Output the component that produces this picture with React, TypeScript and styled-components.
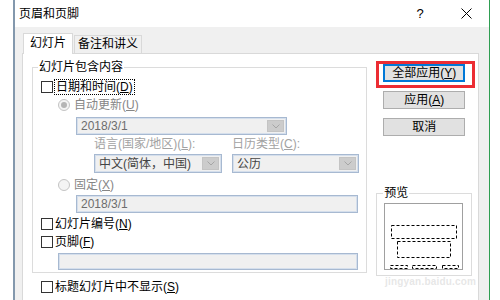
import styled, { createGlobalStyle } from "styled-components";

const GlobalStyle = createGlobalStyle`
  html, body {
    margin: 0;
    padding: 0;
    background: #ffffff;
  }
  body {
    font-family: "Liberation Sans", "Noto Sans CJK SC", sans-serif;
    font-size: 12px;
    color: #000;
  }
`;

const Window = styled.div`
  margin-left: 13px;
  width: 477px;
  height: 300px;
  box-sizing: border-box;
  border-left: 2px solid #8398ad;
  border-right: 1px solid #2f9e52;
  display: flex;
  flex-direction: column;
  overflow: hidden;
`;

const TitleBar = styled.div`
  height: 27px;
  flex: none;
  background: #ffffff;
  display: flex;
  align-items: center;
  padding-left: 4px;
`;

const Title = styled.div`
  flex: 1;
  font-size: 12px;
  line-height: 14px;
`;

const TitleButton = styled.div`
  width: 46px;
  height: 27px;
  display: flex;
  align-items: center;
  justify-content: center;
  font-size: 13px;
`;

const Body = styled.div`
  flex: 1;
  background: #f0f0f0;
  padding: 6px 10px 0 7px;
  display: flex;
  flex-direction: column;
`;

const TabRow = styled.div`
  height: 20px;
  display: flex;
  align-items: flex-end;
  padding-left: 1px;
`;

const Tab = styled.div<{ $active?: boolean }>`
  position: relative;
  z-index: 1;
  box-sizing: border-box;
  height: ${(p) => (p.$active ? "21px" : "18px")};
  margin-bottom: ${(p) => (p.$active ? "-1px" : "0")};
  width: ${(p) => (p.$active ? "50px" : "68px")};
  margin-left: ${(p) => (p.$active ? "0" : "1px")};
  background: ${(p) => (p.$active ? "#ffffff" : "#f0f0f0")};
  border: 1px solid #d9d9d9;
  border-bottom: none;
  display: flex;
  justify-content: center;
  padding-top: ${(p) => (p.$active ? "2px" : "1px")};
  line-height: 14px;
`;

const Panel = styled.div`
  flex: 1;
  background: #ffffff;
  border: 1px solid #d9d9d9;
  border-bottom: none;
  padding: 6px 6px 0 9px;
  display: flex;
`;

const LeftCol = styled.div`
  width: 336px;
  display: flex;
  flex-direction: column;
`;

const Group = styled.fieldset<{ $pad: string }>`
  margin: 0;
  min-width: 0;
  border: 1px solid #dcdcdc;
  padding: ${(p) => p.$pad};
  display: flex;
  flex-direction: column;
`;

const Legend = styled.legend<{ $shift: number }>`
  padding: 0 1px;
  margin-left: ${(p) => p.$shift}px;
  line-height: 14px;
  height: 14px;
`;

const Row = styled.div<{ $mt: number; $indent?: number; $h?: number }>`
  display: flex;
  align-items: center;
  height: ${(p) => p.$h ?? 14}px;
  margin-top: ${(p) => p.$mt}px;
  padding-left: ${(p) => p.$indent ?? 0}px;
  line-height: 14px;
`;

const CheckBox = styled.span`
  width: 12px;
  height: 12px;
  box-sizing: border-box;
  border: 1px solid #333333;
  background: #ffffff;
  margin-right: 2px;
  flex: none;
`;

const FocusText = styled.span`
  outline: 1px dotted #000;
  outline-offset: 0;
  padding: 0 1px;
`;

const Radio = styled.span<{ $checked?: boolean }>`
  width: 12px;
  height: 12px;
  box-sizing: border-box;
  border-radius: 50%;
  border: 1px solid #c4c4c4;
  background: #f4f4f4;
  margin-right: 4px;
  flex: none;
  display: flex;
  align-items: center;
  justify-content: center;
  &::after {
    content: "";
    width: 6px;
    height: 6px;
    border-radius: 50%;
    background: ${(p) => (p.$checked ? "#b5b5b5" : "transparent")};
  }
`;

const Disabled = styled.span<{ $light?: boolean }>`
  color: ${(p) => (p.$light ? "#a2a2a2" : "#868686")};
`;

const Field = styled.div<{ $w: number; $h: number; $dark?: boolean }>`
  width: ${(p) => p.$w}px;
  height: ${(p) => p.$h}px;
  box-sizing: border-box;
  border: 1px solid #a7b9d1;
  box-shadow: inset 0 0 0 1px #d5dfec;
  background: #f0f0f0;
  display: flex;
  align-items: center;
  padding-left: 4px;
  color: ${(p) => (p.$dark ? "#444444" : "#6d6d6d")};
  line-height: 14px;
`;

const FieldText = styled.span`
  flex: 1;
`;

const ArrowBox = styled.span`
  width: 17px;
  align-self: stretch;
  margin: 2px;
  box-sizing: border-box;
  background: #cccccc;
  border: 1px solid #c4c4c4;
  display: flex;
  align-items: center;
  justify-content: center;
`;

const Pair = styled.div<{ $mt: number; $h: number }>`
  display: grid;
  grid-template-columns: 128px 127px;
  column-gap: 10px;
  padding-left: 53px;
  margin-top: ${(p) => p.$mt}px;
  height: ${(p) => p.$h}px;
  align-items: center;
  line-height: 14px;
`;

const RightCol = styled.div`
  width: 96px;
  margin-left: 9px;
  display: flex;
  flex-direction: column;
`;

const ButtonWrap = styled.div<{ $mt: number }>`
  position: relative;
  margin-left: 7px;
  margin-top: ${(p) => p.$mt}px;
  width: 82px;
`;

const Button = styled.div<{ $focus?: boolean }>`
  height: 18px;
  box-sizing: border-box;
  background: #e1e1e1;
  border: 1px solid ${(p) => (p.$focus ? "#0078d7" : "#adadad")};
  box-shadow: ${(p) => (p.$focus ? "inset 0 0 0 1px #0078d7" : "none")};
  display: flex;
  align-items: center;
  justify-content: center;
  line-height: 14px;
`;

const Highlight = styled.div`
  position: absolute;
  left: -7px;
  top: -3px;
  right: -10px;
  bottom: -6px;
  border: 3px solid #ec2d33;
  pointer-events: none;
`;

const PreviewBox = styled.div`
  width: 79px;
  height: 67px;
  box-sizing: border-box;
  border: 1px solid #a0a0a0;
  background: #ffffff;
  margin-top: 3px;
`;

const Watermark = styled.div`
  position: absolute;
  left: 385px;
  top: 276px;
  font-family: "Liberation Sans", sans-serif;
  font-size: 10px;
  font-weight: bold;
  color: rgba(210, 210, 210, 0.55);
  letter-spacing: 0.2px;
`;

const Chevron = () => (
  <svg width="8" height="5" viewBox="0 0 8 5">
    <polyline points="0.5,0.5 4,4 7.5,0.5" fill="none" stroke="#a6a6a6" strokeWidth="1" />
  </svg>
);

const Mn = ({ c }: { c: string }) => (
  <>
    (<u>{c}</u>)
  </>
);

export default function App() {
  return (
    <>
      <GlobalStyle />
      <Window>
        <TitleBar>
          <Title>页眉和页脚</Title>
          <TitleButton>?</TitleButton>
          <TitleButton>
            <svg width="11" height="11" viewBox="0 0 11 11">
              <path d="M0.5 0.5 L10.5 10.5 M10.5 0.5 L0.5 10.5" stroke="#000" strokeWidth="1" />
            </svg>
          </TitleButton>
        </TitleBar>
        <Body>
          <TabRow>
            <Tab $active>幻灯片</Tab>
            <Tab>备注和讲义</Tab>
          </TabRow>
          <Panel>
            <LeftCol>
              <Group $pad="0 0 2px 8px">
                <Legend $shift={-3}>幻灯片包含内容</Legend>
                <Row $mt={6}>
                  <CheckBox />
                  <FocusText>
                    日期和时间<Mn c="D" />
                  </FocusText>
                </Row>
                <Row $mt={4} $indent={17}>
                  <Radio $checked />
                  <Disabled>
                    自动更新<Mn c="U" />
                  </Disabled>
                </Row>
                <Row $mt={5} $indent={35} $h={18}>
                  <Field $w={211} $h={18}>
                    <FieldText>2018/3/1</FieldText>
                    <ArrowBox>
                      <Chevron />
                    </ArrowBox>
                  </Field>
                </Row>
                <Pair $mt={2} $h={14}>
                  <Disabled $light>
                    语言(国家/地区)<Mn c="L" />:
                  </Disabled>
                  <Disabled $light>
                    日历类型<Mn c="C" />:
                  </Disabled>
                </Pair>
                <Pair $mt={3} $h={19}>
                  <Field $w={128} $h={19} $dark>
                    <FieldText>中文(简体，中国)</FieldText>
                    <ArrowBox>
                      <Chevron />
                    </ArrowBox>
                  </Field>
                  <Field $w={127} $h={19} $dark>
                    <FieldText>公历</FieldText>
                    <ArrowBox>
                      <Chevron />
                    </ArrowBox>
                  </Field>
                </Pair>
                <Row $mt={5} $indent={17}>
                  <Radio />
                  <Disabled>
                    固定<Mn c="X" />
                  </Disabled>
                </Row>
                <Row $mt={3} $indent={35} $h={18}>
                  <Field $w={282} $h={18}>
                    <FieldText>2018/3/1</FieldText>
                  </Field>
                </Row>
                <Row $mt={4}>
                  <CheckBox />
                  <span>
                    幻灯片编号<Mn c="N" />
                  </span>
                </Row>
                <Row $mt={4}>
                  <CheckBox />
                  <span>
                    页脚<Mn c="F" />
                  </span>
                </Row>
                <Row $mt={4} $indent={17} $h={17}>
                  <Field $w={300} $h={17} />
                </Row>
              </Group>
              <Row $mt={7} $indent={9}>
                <CheckBox />
                <span>
                  标题幻灯片中不显示<Mn c="S" />
                </span>
              </Row>
            </LeftCol>
            <RightCol>
              <ButtonWrap $mt={4}>
                <Button $focus>
                  全部应用<Mn c="Y" />
                </Button>
                <Highlight />
              </ButtonWrap>
              <ButtonWrap $mt={9}>
                <Button>
                  应用<Mn c="A" />
                </Button>
              </ButtonWrap>
              <ButtonWrap $mt={9}>
                <Button>取消</Button>
              </ButtonWrap>
              <Group $pad="0 7px 5px 7px" style={{ marginTop: 50 }}>
                <Legend $shift={-1}>预览</Legend>
                <PreviewBox>
                  <svg width="77" height="65" viewBox="0 0 77 65">
                    <g fill="none" stroke="#000" strokeWidth="1" strokeDasharray="3 2">
                      <rect x="6.5" y="21.5" width="65" height="13" />
                      <rect x="12.5" y="37.5" width="53" height="16" />
                      <rect x="5.5" y="61.5" width="17" height="3" />
                      <rect x="27.5" y="61.5" width="24" height="3" />
                      <rect x="57.5" y="61.5" width="16" height="3" />
                    </g>
                  </svg>
                </PreviewBox>
              </Group>
            </RightCol>
          </Panel>
        </Body>
      </Window>
      <Watermark>jingyan.baidu.com</Watermark>
    </>
  );
}
